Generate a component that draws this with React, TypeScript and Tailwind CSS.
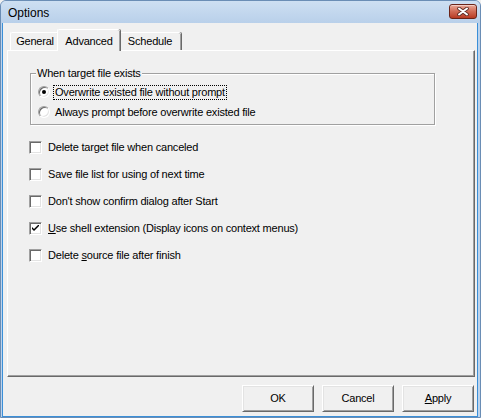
import type { ReactNode } from "react";

function CloseButton() {
  return (
    <div className="flex h-[15px] w-[28px] items-center justify-center rounded-[3px] border border-[#6b2418] bg-gradient-to-b from-[#e9a797] via-[#d06a54] to-[#b83a22] shadow-[inset_0_1px_0_rgba(255,255,255,0.45)]">
      <svg width="12" height="9" viewBox="0 0 12 9">
        <path d="M2 1.5 L10 7.5 M10 1.5 L2 7.5" stroke="#5a2a22" strokeWidth="3.6" strokeLinecap="round" />
        <path d="M2 1.5 L10 7.5 M10 1.5 L2 7.5" stroke="#ffffff" strokeWidth="2" strokeLinecap="round" />
      </svg>
    </div>
  );
}

function Tab({ label, active, width }: { label: string; active?: boolean; width: string }) {
  if (active) {
    return (
      <div
        className={`relative z-10 -mx-[2px] -mb-px flex h-[22px] ${width} items-start justify-center rounded-t-[2px] border-l border-t border-white bg-[#f0f0f0] pt-[3px] shadow-[inset_-1px_0_0_#a0a0a0,1px_0_0_#696969]`}
      >
        {label}
      </div>
    );
  }
  return (
    <div
      className={`flex h-[18px] ${width} items-center justify-center rounded-t-[2px] border-l border-t border-white bg-[#f0f0f0] shadow-[inset_-1px_0_0_#a0a0a0,1px_0_0_#696969]`}
    >
      {label}
    </div>
  );
}

function Radio({ checked, focused, children }: { checked?: boolean; focused?: boolean; children: ReactNode }) {
  return (
    <div className="flex h-[20px] items-center gap-[3px]">
      <div className="flex h-[12px] w-[12px] items-center justify-center rounded-full border border-t-[#a0a0a0] border-l-[#a0a0a0] border-b-white border-r-white bg-white shadow-[inset_1px_1px_0_#696969,inset_-1px_-1px_0_#e3e3e3]">
        {checked && <div className="h-[4px] w-[4px] rounded-full bg-black" />}
      </div>
      <span
        className={`border px-[1px] leading-[13px] ${focused ? "border-dotted border-black" : "border-transparent"}`}
      >
        {children}
      </span>
    </div>
  );
}

function Check({ checked, children }: { checked?: boolean; children: ReactNode }) {
  return (
    <div className="flex h-[27px] items-center gap-[6px]">
      <div className="flex h-[13px] w-[13px] items-center justify-center border border-t-[#a0a0a0] border-l-[#a0a0a0] border-b-white border-r-white bg-white shadow-[inset_1px_1px_0_#696969,inset_-1px_-1px_0_#e3e3e3]">
        {checked && (
          <svg width="7" height="7" viewBox="0 0 7 7">
            <path d="M0 2 L0 4 L2 6 L7 1 L7 -1 L2 4 Z" fill="#000" />
          </svg>
        )}
      </div>
      <span className="leading-[13px]">{children}</span>
    </div>
  );
}

function Button({ children }: { children: ReactNode }) {
  return (
    <div className="flex h-[27px] w-[72px] items-center justify-center border border-t-white border-l-white border-b-[#696969] border-r-[#696969] bg-[#f0f0f0] shadow-[inset_1px_1px_0_#e3e3e3,inset_-1px_-1px_0_#a0a0a0]">
      {children}
    </div>
  );
}

export default function App() {
  return (
    <div className="h-[418px] w-[481px] overflow-hidden bg-[#f0f0f0] font-['Liberation_Sans',Arial,sans-serif] text-[11px] tracking-[-0.2px] text-black">
      <div className="flex h-full flex-col rounded-t-[6px] border border-[#6a8db5] bg-[#bcd3ec]">
        {/* title bar */}
        <div className="flex h-[22px] shrink-0 items-center justify-between rounded-t-[5px] bg-gradient-to-b from-[#cddff2] to-[#b9d0ea] pl-[7px] pr-[3px] pt-[2px]">
          <span className="text-[12px] tracking-normal">Options</span>
          <div className="-mt-[3px]">
            <CloseButton />
          </div>
        </div>

        {/* body */}
        <div className="ml-[1px] mr-[2px] flex flex-1 flex-col border-b border-l border-r border-[#3a8fd8] bg-[#f0f0f0]">
          <div className="mt-[6px] flex h-[21px] items-end pl-[7px]">
            <Tab label="General" width="w-[49px]" />
            <Tab label="Advanced" width="w-[63px]" active />
            <Tab label="Schedule" width="w-[63px]" />
          </div>

          <div className="ml-[4px] mr-[2px] flex flex-1 flex-col border-l border-t border-white border-b-[#696969] border-r-[#696969] border-b border-r shadow-[inset_-1px_-1px_0_#a0a0a0]">
            <div className="relative ml-[22px] mt-[22px] h-[52px] w-[405px] border border-[#a0a0a0] pl-[7px] pt-[8px] shadow-[1px_1px_0_#ffffff,inset_1px_1px_0_#ffffff]">
              <span className="absolute -top-[7px] left-[5px] bg-[#f0f0f0] px-[1px] leading-[13px]">
                When target file exists
              </span>
              <Radio checked focused>
                Overwrite existed file without prompt
              </Radio>
              <Radio>Always prompt before overwrite existed file</Radio>
            </div>

            <div className="ml-[21px] mt-[9px] flex flex-col">
              <Check>Delete target file when canceled</Check>
              <Check>Save file list for using of next time</Check>
              <Check>Don't show confirm dialog after Start</Check>
              <Check checked>
                <span className="underline">U</span>se shell extension (Display icons on context menus)
              </Check>
              <Check>
                Delete <span className="underline">s</span>ource file after finish
              </Check>
            </div>
          </div>

          <div className="mb-[4px] mt-[8px] flex justify-end gap-[8px] pr-[3px]">
            <Button>OK</Button>
            <Button>Cancel</Button>
            <Button>
              <span>
                <span className="underline">A</span>pply
              </span>
            </Button>
          </div>
        </div>
      </div>
    </div>
  );
}
